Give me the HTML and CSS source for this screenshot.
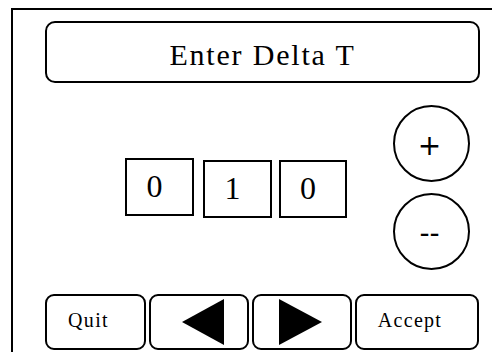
FILE: index.html
```html
<!DOCTYPE html>
<html lang="en">
<head>
    <meta charset="UTF-8">
    <title>Enter Delta T</title>
    <link rel="stylesheet" href="styles.css">
</head>
<body>
    <div class="frame">
        <div class="title">Enter Delta T</div>

        <div class="middle">
            <div class="digits">
                <div class="digit first">0</div>
                <div class="digit second">1</div>
                <div class="digit third">0</div>
            </div>
            <div class="steppers">
                <div class="circle">+</div>
                <div class="circle minus">--</div>
            </div>
        </div>

        <div class="buttons">
            <div class="btn quit">Quit</div>
            <div class="btn arrow">
                <svg width="42" height="46" viewBox="0 0 42 46"><polygon points="0,23 42,0 42,46" fill="#000"/></svg>
            </div>
            <div class="btn arrow right">
                <svg width="43" height="46" viewBox="0 0 43 46"><polygon points="0,0 43,23 0,46" fill="#000"/></svg>
            </div>
            <div class="btn accept">Accept</div>
        </div>
    </div>
</body>
</html>
```

FILE: styles.css
```css
html, body {
    margin: 0;
    padding: 0;
    width: 492px;
    height: 352px;
    overflow: hidden;
    background-color: #fff;
}

body {
    font-family: "Liberation Serif", "Times New Roman", serif;
    color: #000;
}

.frame {
    margin: 8px 0 0 11px;
    width: 481px;
    height: 344px;
    box-sizing: border-box;
    border-left: 2px solid #000;
    border-top: 2px solid #000;
    padding: 11px 0 0 32px;
}

.title {
    width: 435px;
    height: 62px;
    box-sizing: border-box;
    border: 2px solid #000;
    border-radius: 10px;
    display: flex;
    align-items: center;
    justify-content: center;
    padding-top: 5px;
    font-size: 30px;
    letter-spacing: 1.8px;
}

.middle {
    display: flex;
    align-items: center;
    margin-top: 22px;
}

.digits {
    display: flex;
    align-items: flex-start;
    margin-left: 80px;
}

.digit {
    width: 69px;
    height: 58px;
    box-sizing: border-box;
    border: 2px solid #000;
    display: flex;
    align-items: center;
    justify-content: center;
    padding-right: 10px;
    font-size: 32px;
}

.digit.second {
    margin-top: 2px;
    margin-left: 9px;
}

.digit.third {
    margin-top: 2px;
    margin-left: 7px;
    width: 68px;
}

.steppers {
    display: flex;
    flex-direction: column;
    gap: 11px;
    margin-left: 46px;
}

.circle {
    width: 77px;
    height: 77px;
    box-sizing: border-box;
    border: 2px solid #000;
    border-radius: 50%;
    display: flex;
    align-items: center;
    justify-content: center;
    padding: 3px 4px 0 0;
    font-family: "DejaVu Sans", sans-serif;
    font-size: 28px;
}

.circle.minus {
    padding-top: 4px;
}

.buttons {
    display: flex;
    gap: 3px;
    margin-top: 24px;
}

.btn {
    width: 100px;
    height: 56px;
    box-sizing: border-box;
    border: 2px solid #000;
    border-radius: 9px;
    display: flex;
    align-items: center;
    justify-content: center;
    font-size: 20px;
    letter-spacing: 1.3px;
}

.btn.quit {
    width: 101px;
    padding: 0 14px 4px 0;
}

.btn.accept {
    width: 124px;
    padding: 0 14px 4px 0;
}

.btn.arrow svg {
    display: block;
    margin-left: 8px;
}

.btn.arrow.right svg {
    margin-left: 0;
    margin-right: 4px;
}
```
